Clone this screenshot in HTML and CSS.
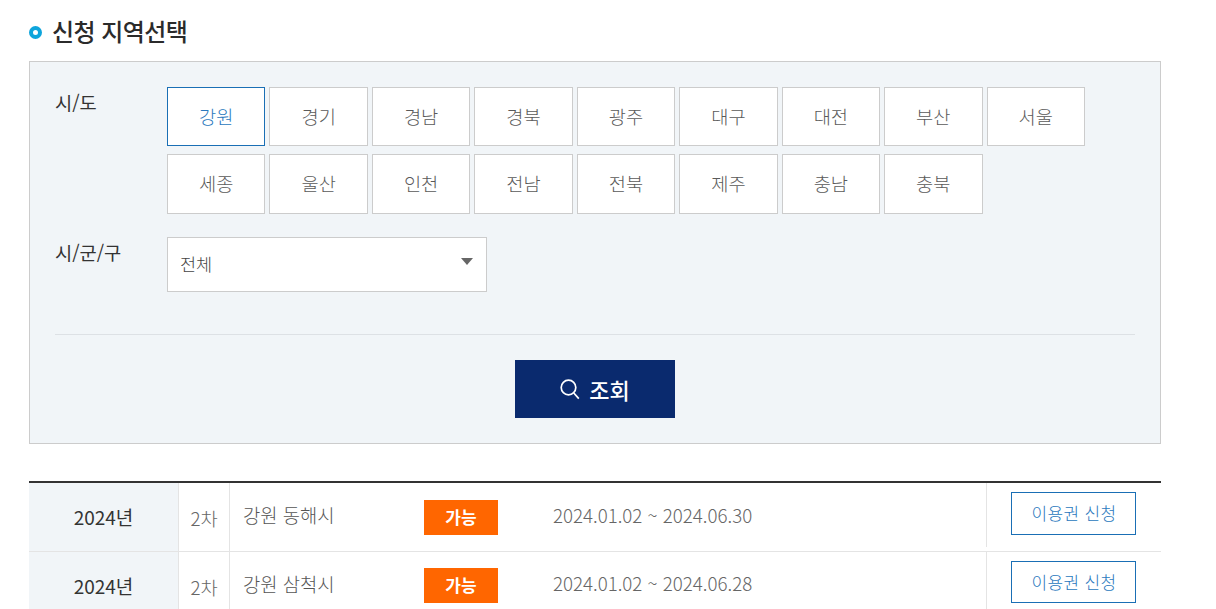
FILE: index.html
```html
<!DOCTYPE html>
<html lang="ko">
<head>
<meta charset="utf-8">
<title>신청 지역선택</title>
<link rel="stylesheet" href="styles.css">
</head>
<body>
<main class="page">
  <h2 class="title"><span class="dot"></span>신청 지역선택</h2>
  <section class="panel">
    <div class="field">
      <div class="label">시/도</div>
      <div class="regions">
        <button class="region active">강원</button>
        <button class="region">경기</button>
        <button class="region">경남</button>
        <button class="region">경북</button>
        <button class="region">광주</button>
        <button class="region">대구</button>
        <button class="region">대전</button>
        <button class="region">부산</button>
        <button class="region">서울</button>
        <button class="region">세종</button>
        <button class="region">울산</button>
        <button class="region">인천</button>
        <button class="region">전남</button>
        <button class="region">전북</button>
        <button class="region">제주</button>
        <button class="region">충남</button>
        <button class="region">충북</button>
      </div>
    </div>
    <div class="field field-sub">
      <div class="label">시/군/구</div>
      <div class="select"><span>전체</span><i class="caret"></i></div>
    </div>
    <div class="actions">
      <button class="search">
        <svg class="search-icon" width="22" height="22" viewBox="0 0 22 22" fill="none" stroke="#fff" stroke-width="1.7"><circle cx="9.5" cy="9.5" r="7.3"/><path d="M14.8 15l5 5.6"/></svg>
        <span>조회</span>
      </button>
    </div>
  </section>
  <div class="list">
    <div class="row">
      <div class="year">2024년</div>
      <div class="round">2차</div>
      <div class="info">
        <span class="place">강원 동해시</span>
        <span class="badge">가능</span>
        <span class="dates">2024.01.02 ~ 2024.06.30</span>
      </div>
      <div class="cta"><a class="apply">이용권 신청</a></div>
    </div>
    <div class="row">
      <div class="year">2024년</div>
      <div class="round">2차</div>
      <div class="info">
        <span class="place">강원 삼척시</span>
        <span class="badge">가능</span>
        <span class="dates">2024.01.02 ~ 2024.06.28</span>
      </div>
      <div class="cta"><a class="apply">이용권 신청</a></div>
    </div>
  </div>
</main>
</body>
</html>
```
FILE: styles.css
```css
* { box-sizing: border-box; }
html, body { margin: 0; height: 609px; overflow: hidden; background: #fff; }
body { font-family: "Noto Sans CJK KR", "Noto Sans", sans-serif; font-weight: 300; color: #333; }
.page { width: 1132px; margin-left: 29px; padding-top: 12px; }
.title { display: flex; align-items: center; height: 36px; margin: 0 0 13px; font-size: 24px; font-weight: 500; letter-spacing: -0.55px; color: #2b2b2b; }
.dot { width: 13px; height: 13px; margin: 4px 10px 0 0; border: 4px solid #0ea5dc; border-radius: 50%; background: #fff; }
.panel { height: 383px; padding: 25px 25px 0; background: #f1f5f8; border: 1px solid #ccc; }
.field { display: flex; }
.field-sub { margin-top: 23.2px; }
.label { width: 112px; padding-top: 2px; font-size: 18.7px; line-height: 26px; font-weight: 400; color: #333; }
.regions { display: flex; flex-wrap: wrap; gap: 8px 4px; width: 930px; }
.region { width: 98.45px; height: 59.4px; padding: 0 0 2.6px; background: #fff; border: 1px solid #ccc; font: inherit; font-size: 18.7px; color: #5a5a5a; }
.region.active { border-color: #1a6fb5; color: #2a78bd; }
.select { display: flex; align-items: center; justify-content: space-between; width: 320px; height: 55px; padding: 0 13px 2px 12px; background: #fff; border: 1px solid #ccc; font-size: 17.5px; color: #444; }
.caret { margin-top: -3px; border-style: solid; border-width: 7px 6.5px 0; border-color: #666 transparent transparent; }
.actions { display: flex; justify-content: center; margin-top: 42px; padding-top: 25px; border-top: 1px solid #dde1e5; }
.search { display: flex; align-items: center; justify-content: center; gap: 8px; width: 160px; height: 58px; padding: 0 1px 0 0; background: #0a2a6e; border: 0; color: #fff; font: inherit; font-size: 22px; font-weight: 500; }
.list { margin-top: 37px; border-top: 2px solid #333; }
.row { display: flex; height: 68.5px; border-bottom: 1px solid #e4e4e4; }
.year { display: flex; align-items: center; justify-content: center; width: 149px; background: #f1f5f8; font-size: 19px; font-weight: 400; color: #333; }
.round { display: flex; align-items: center; justify-content: center; width: 52px; padding-top: 2px; border-left: 1px solid #e4e4e4; border-right: 1px solid #e4e4e4; font-size: 18.7px; color: #666; }
.info { display: flex; align-items: center; flex: 1; padding-left: 13px; font-size: 18.8px; color: #555; }
.place { width: 181px; margin-top: -4.5px; }
.badge { display: flex; align-items: center; justify-content: center; width: 74px; height: 35px; margin-top: 0.7px; background: #ff6600; color: #fff; font-size: 17px; font-weight: 700; padding-bottom: 2px; }
.dates { margin-left: 55px; margin-top: -4.6px; font-size: 18.7px; color: #666; }
.cta { display: flex; align-items: center; justify-content: center; width: 175px; height: 64px; padding-right: 2px; border-left: 1px solid #e4e4e4; }
.apply { display: flex; align-items: center; justify-content: center; width: 125px; height: 42.5px; margin-top: -2.7px; padding: 0 0 2px 2px; border: 1px solid #1a6fb5; font-size: 17px; letter-spacing: 0.3px; color: #2a78bd; }
```
